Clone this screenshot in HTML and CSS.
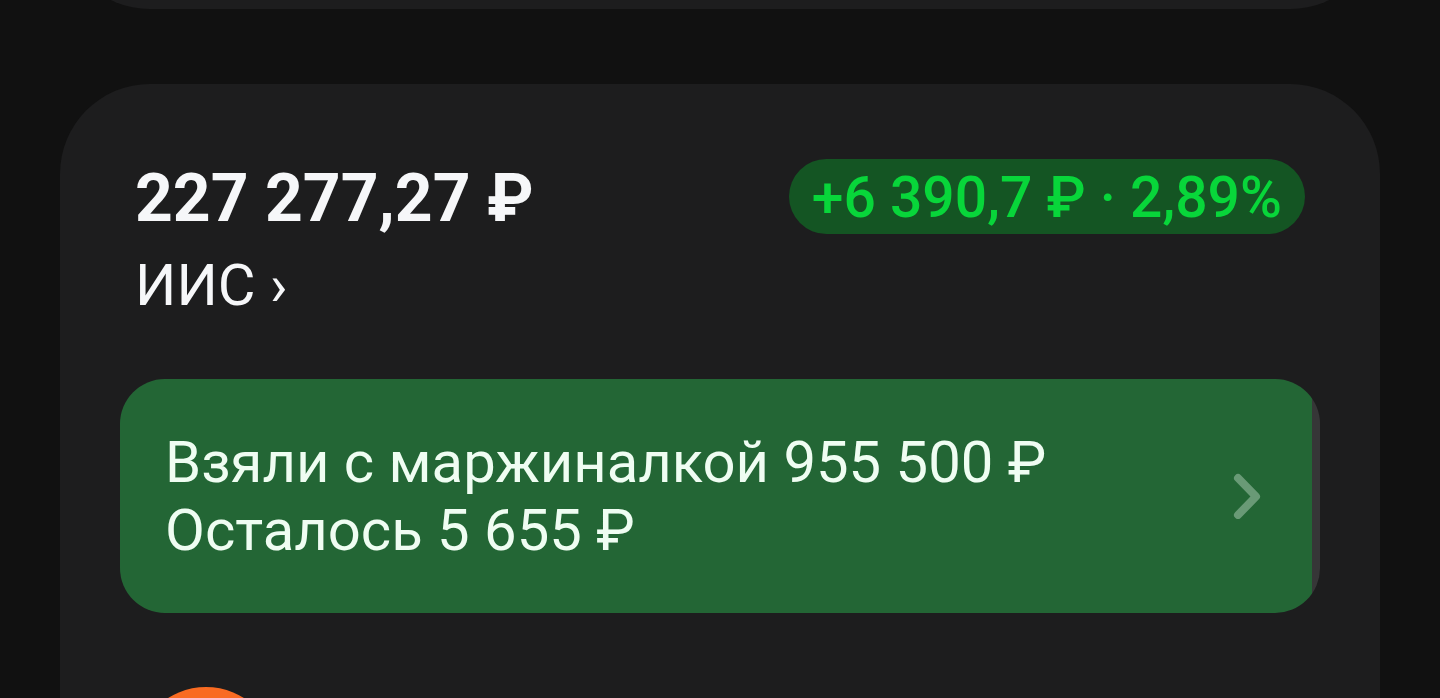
FILE: index.html
```html
<!DOCTYPE html>
<html lang="ru">

<head>
    <meta charset="UTF-8">
    <meta name="viewport" content="width=device-width, initial-scale=1.0">
    <title>ИИС</title>
    <link rel="stylesheet" href="styles.css">
</head>

<body>
    <main class="feed">
        <section class="card card-previous"></section>

        <section class="card">
            <header class="account">
                <div class="account-info">
                    <h1 class="account-total">227 277,27 ₽</h1>
                    <a class="account-link" href="#iis">ИИС ›</a>
                </div>
                <span class="profit">+6 390,7 ₽ · 2,89%</span>
            </header>

            <button type="button" class="margin-banner" style="--used: 99.3%">
                <span class="margin-text">Взяли с маржиналкой 955 500 ₽<br>Осталось 5 655 ₽</span>
                <svg class="chevron" viewBox="0 0 28 46" aria-hidden="true">
                    <path d="M5 5 L23 23.5 L5 42" />
                </svg>
            </button>

            <ul class="assets">
                <li class="asset"><span class="asset-logo"></span></li>
            </ul>
        </section>
    </main>
</body>

</html>
```
FILE: styles.css
```css
* {
    box-sizing: border-box;
}

body {
    margin: 0;
    height: 100vh;
    overflow: hidden;
    background-color: #111111;
    color: #f6f7f9;
    font-family: Roboto, "Liberation Sans", sans-serif;
    font-size: 58px;
    line-height: 68px;
}

.feed {
    display: flex;
    flex-direction: column;
    gap: 75px;
    padding: 0 60px;
}

.card {
    padding: 75px 60px;
    border-radius: 90px;
    background-color: #1d1d1e;
}

/* Scrolled away, only the bottom edge is visible */
.card-previous {
    height: 200px;
    margin-top: -191px;
}

.account {
    display: flex;
    justify-content: space-between;
    align-items: flex-start;
    padding: 0 15px;
    margin-bottom: 60px;
}

.account-info {
    display: flex;
    flex-direction: column;
    align-items: flex-start;
    gap: 12px;
}

.account-total {
    margin: 0;
    font-size: 66px;
    font-weight: 700;
    line-height: 80px;
}

.account-link {
    color: inherit;
    text-decoration: none;
}

.profit {
    padding: 2px 23px 0;
    border-radius: 38px;
    background-color: #145523;
    color: #08d63a;
    font-size: 57px;
    font-weight: 500;
    line-height: 73px;
    white-space: nowrap;
}

.margin-banner {
    display: flex;
    justify-content: space-between;
    align-items: center;
    width: 100%;
    padding: 49px 59px 49px 45px;
    border: none;
    border-radius: 45px;
    /* Filled part shows how much of the margin is used */
    background: linear-gradient(to right, #236635 var(--used), #363637 var(--used));
    color: #effdf2;
    font: inherit;
    text-align: left;
    cursor: pointer;
}

.chevron {
    width: 28px;
    height: 46px;
    fill: none;
    stroke: #699a76;
    stroke-width: 8;
    stroke-linecap: round;
    stroke-linejoin: round;
}

.assets {
    margin: 0;
    padding: 74px 15px 0;
    list-style: none;
}

.asset {
    display: flex;
}

.asset-logo {
    width: 142px;
    height: 142px;
    border-radius: 50%;
    background-color: #f96b22;
}
```
